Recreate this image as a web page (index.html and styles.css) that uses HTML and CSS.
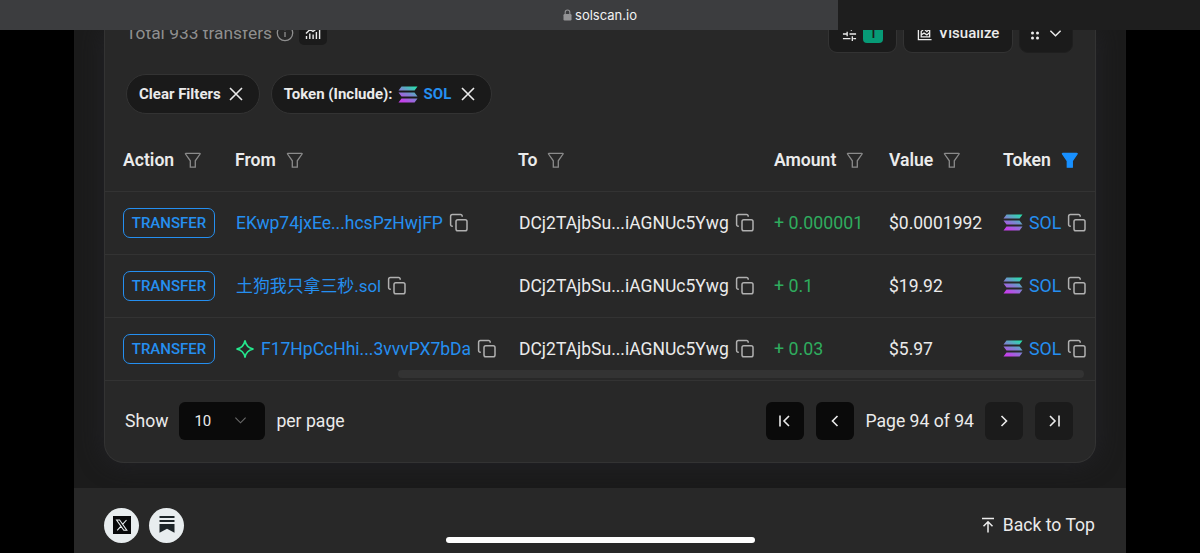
FILE: index.html
```html
<!DOCTYPE html>
<html lang="en">
<head>
    <meta charset="UTF-8">
    <meta name="viewport" content="width=device-width, initial-scale=1.0">
    <title>Solscan</title>
    <link rel="stylesheet" href="styles.css">
</head>
<body>
    <!-- Shared icons -->
    <svg class="icon-defs" aria-hidden="true">
        <defs>
            <linearGradient id="sol-gradient" gradientUnits="userSpaceOnUse" x1="15" y1="0" x2="6" y2="16">
                <stop offset="0" stop-color="#2bdcae"/>
                <stop offset="0.5" stop-color="#7b86d0"/>
                <stop offset="1" stop-color="#c440ea"/>
            </linearGradient>
        </defs>
        <symbol id="icon-filter" viewBox="0 0 18 18">
            <path d="M1.800 2.300h13.900c.4 0 .6.4.4.7L11.300 9.800v6.400H6.300V9.800L1.500 3c-.2-.3 0-.7.3-.7z"/>
        </symbol>
        <symbol id="icon-copy" viewBox="0 0 20 20">
            <rect x="7" y="6.800" width="11" height="11" rx="1.800"/>
            <path d="M3.800 13.200h-.6a1.600 1.600 0 0 1-1.600-1.600V3.400a1.800 1.800 0 0 1 1.800-1.800h8.200a1.600 1.600 0 0 1 1.600 1.600v.6"/>
        </symbol>
        <symbol id="icon-sol" viewBox="0 0 20 17">
            <path d="M3.500.5h16L16.600 4.600H.5zM.5 6.500h16l3 4h-16zM3.500 12.400h16l-2.900 4.100H.5z" fill="url(#sol-gradient)"/>
        </symbol>
        <symbol id="icon-close" viewBox="0 0 14 14">
            <path d="M1 1l12 12M13 1L1 13"/>
        </symbol>
        <symbol id="icon-down" viewBox="0 0 14 9">
            <path d="M1.500 1.500L7 7l5.500-5.500"/>
        </symbol>
    </svg>

    <header class="browser-bar">
        <div class="address">
            <svg class="lock" viewBox="0 0 9 12"><rect x="0.500" y="5" width="8" height="6.500" rx="1.200" fill="#939395"/><path d="M2.200 5.500V3.300a2.300 2.300 0 0 1 4.600 0v2.200" fill="none" stroke="#939395" stroke-width="1.100"/></svg>
            <span>solscan.io</span>
        </div>
    </header>

    <main class="page">
        <section class="card">
            <div class="toolbar">
                <span class="total">Total 933 transfers</span>
                <svg class="info" viewBox="0 0 18 18"><circle cx="9" cy="9" r="7.700"/><path d="M9 8v5M9 5v1.300"/></svg>
                <button type="button" class="chart-btn">
                    <svg viewBox="0 0 16 14"><path d="M1.500 13v-3M4.800 13V7.500M8.100 13V8.500M11.400 13V6M14.600 13V3M1 7.500l4-4 3 2L14 .8"/></svg>
                </button>
                <div class="tools">
                    <button type="button" class="tool tool-filter">
                        <svg class="sliders" viewBox="0 0 16 16"><path d="M1 3h9M13 3h2M10 1v4M1 8.500h4M8 8.500h7M5.500 6v5M1 13.500h8M12 13.500h3M11 11v5"/></svg>
                        <span class="count">1</span>
                    </button>
                    <button type="button" class="tool tool-visualize">
                        <svg class="chart" viewBox="0 0 16 16"><path d="M1.500 1v13.500H15.500M4.500 11.500V6l3-3 3 3 3-3v8.500zM4.500 9.500l3-2 3 2 3-2.500"/></svg>
                        Visualize
                    </button>
                    <button type="button" class="tool tool-more">
                        <svg class="dots" viewBox="0 0 8 14"><circle cx="1.500" cy="2" r="1.500"/><circle cx="6.500" cy="2" r="1.500"/><circle cx="1.500" cy="7" r="1.500"/><circle cx="6.500" cy="7" r="1.500"/><circle cx="1.500" cy="12" r="1.500"/><circle cx="6.500" cy="12" r="1.500"/></svg>
                        <svg class="down"><use href="#icon-down"/></svg>
                    </button>
                </div>
            </div>

            <div class="filters">
                <button type="button" class="pill">Clear Filters <svg class="close"><use href="#icon-close"/></svg></button>
                <button type="button" class="pill">Token (Include): <svg class="sol"><use href="#icon-sol"/></svg> <span class="link">SOL</span> <svg class="close"><use href="#icon-close"/></svg></button>
            </div>

            <div class="table-wrap">
                <table class="transfers">
                    <thead>
                        <tr>
                            <th class="col-action"><div class="cell">Action <svg class="filter"><use href="#icon-filter"/></svg></div></th>
                            <th class="col-from"><div class="cell">From <svg class="filter"><use href="#icon-filter"/></svg></div></th>
                            <th class="col-to"><div class="cell">To <svg class="filter"><use href="#icon-filter"/></svg></div></th>
                            <th class="col-amount"><div class="cell">Amount <svg class="filter"><use href="#icon-filter"/></svg></div></th>
                            <th class="col-value"><div class="cell">Value <svg class="filter"><use href="#icon-filter"/></svg></div></th>
                            <th class="col-token"><div class="cell">Token <svg class="filter active"><use href="#icon-filter"/></svg></div></th>
                        </tr>
                    </thead>
                    <tbody>
                        <tr>
                            <td class="col-action"><span class="badge">TRANSFER</span></td>
                            <td><div class="cell"><a class="link address-text">EKwp74jxEe...hcsPzHwjFP</a><svg class="copy"><use href="#icon-copy"/></svg></div></td>
                            <td><div class="cell"><span class="address-text">DCj2TAjbSu...iAGNUc5Ywg</span><svg class="copy"><use href="#icon-copy"/></svg></div></td>
                            <td class="amount">+ 0.000001</td>
                            <td class="value">$0.0001992</td>
                            <td><div class="cell token"><svg class="sol"><use href="#icon-sol"/></svg><a class="link">SOL</a><svg class="copy"><use href="#icon-copy"/></svg></div></td>
                        </tr>
                        <tr>
                            <td class="col-action"><span class="badge">TRANSFER</span></td>
                            <td><div class="cell"><a class="link address-text domain">土狗我只拿三秒.sol</a><svg class="copy"><use href="#icon-copy"/></svg></div></td>
                            <td><div class="cell"><span class="address-text">DCj2TAjbSu...iAGNUc5Ywg</span><svg class="copy"><use href="#icon-copy"/></svg></div></td>
                            <td class="amount">+ 0.1</td>
                            <td class="value">$19.92</td>
                            <td><div class="cell token"><svg class="sol"><use href="#icon-sol"/></svg><a class="link">SOL</a><svg class="copy"><use href="#icon-copy"/></svg></div></td>
                        </tr>
                        <tr>
                            <td class="col-action"><span class="badge">TRANSFER</span></td>
                            <td><div class="cell"><svg class="spark" viewBox="0 0 20 20"><path d="M10 1.500Q11.200 8.800 18.500 10Q11.200 11.200 10 18.500Q8.800 11.200 1.500 10Q8.800 8.800 10 1.500z"/></svg><a class="link address-text">F17HpCcHhi...3vvvPX7bDa</a><svg class="copy"><use href="#icon-copy"/></svg></div></td>
                            <td><div class="cell"><span class="address-text">DCj2TAjbSu...iAGNUc5Ywg</span><svg class="copy"><use href="#icon-copy"/></svg></div></td>
                            <td class="amount">+ 0.03</td>
                            <td class="value">$5.97</td>
                            <td><div class="cell token"><svg class="sol"><use href="#icon-sol"/></svg><a class="link">SOL</a><svg class="copy"><use href="#icon-copy"/></svg></div></td>
                        </tr>
                    </tbody>
                </table>
                <div class="scroll-thumb"></div>
            </div>

            <div class="pagination">
                <span>Show</span>
                <div class="page-size">10 <svg class="down"><use href="#icon-down"/></svg></div>
                <span>per page</span>
                <div class="pager">
                    <button type="button" aria-label="First page"><svg viewBox="0 0 14 14"><path d="M2 1.500v11M11 2L6 7l5 5"/></svg></button>
                    <button type="button" aria-label="Previous page"><svg viewBox="0 0 14 14"><path d="M9.500 2l-5 5 5 5"/></svg></button>
                    <span class="page-label">Page 94 of 94</span>
                    <button type="button" class="off" aria-label="Next page"><svg viewBox="0 0 14 14"><path d="M4.500 2l5 5-5 5"/></svg></button>
                    <button type="button" class="off" aria-label="Last page"><svg viewBox="0 0 14 14"><path d="M3 2l5 5-5 5M12 1.500v11"/></svg></button>
                </div>
            </div>
        </section>

        <footer class="footer">
            <a class="social" aria-label="X"><svg viewBox="0 0 18 18"><path d="M0 0h18v18H0z" fill="#08090b"/><path d="M3.600 4h3l7.200 10.200h-3zM13.500 4L9.800 8.200M8 10.200L4.200 14.400" fill="none" stroke="#e8edef" stroke-width="1.100"/></svg></a>
            <a class="social" aria-label="Substack"><svg viewBox="0 0 18 18"><path d="M1.500 0h15v2h-15zM1.500 4h15v2h-15zM1.500 8h15v8.800L9 12.700l-7.500 4.100z" fill="#1c2428"/></svg></a>
            <a class="back-top"><svg viewBox="0 0 14 16"><path d="M1 1.500h12M7 15.500V5M2.500 9.200L7 4.700l4.500 4.500"/></svg> Back to Top</a>
        </footer>
    </main>

    <div class="home-indicator"></div>
</body>
</html>
```
FILE: styles.css
```css
* {
    box-sizing: border-box;
}

body {
    margin: 0;
    height: 553px;
    overflow: hidden;
    display: flex;
    flex-direction: column;
    position: relative;
    background-color: #000;
    color: #ebebeb;
    font-family: Roboto, "Noto Sans CJK SC", sans-serif;
    font-size: 17.6px;
}

button {
    margin: 0;
    padding: 0;
    border: none;
    color: inherit;
    font: inherit;
    cursor: pointer;
}

svg {
    display: block;
    flex: none;
    fill: none;
    stroke: currentColor;
}

.icon-defs {
    position: absolute;
    width: 0;
    height: 0;
}

/* Browser bar */
.browser-bar {
    flex: none;
    height: 30px;
    padding-right: 362px;
    background-color: #1e1e1e;
}

.address {
    height: 30px;
    padding-left: 362px;
    background-color: #3c3d3f;
    display: flex;
    align-items: center;
    justify-content: center;
    gap: 3px;
    color: #f2f2f2;
    font-family: Inter, sans-serif;
    font-size: 13px;
}

.lock {
    width: 9px;
    height: 12px;
    stroke: none;
}

/* Page */
.page {
    flex: 1;
    min-height: 0;
    width: 1052px;
    margin: 0 auto;
    display: flex;
    flex-direction: column;
    overflow: hidden;
    background-color: #1b1b1b;
}

.card {
    flex: none;
    height: 433px;
    margin: 0 30px 25px;
    border: 1px solid #333;
    border-top: none;
    border-radius: 0 0 20px 20px;
    background-color: #282828;
    box-shadow: 0 0 24px #232328;
}

.toolbar {
    height: 38px;
    margin-top: -16px;
    padding: 0 22px 0 21px;
    display: flex;
    align-items: center;
}

.total {
    color: #8f8f8f;
    font-size: 17.4px;
}

.info {
    width: 18px;
    height: 18px;
    margin-left: 4px;
    color: #8f8f8f;
    stroke-width: 1.3;
}

.chart-btn {
    width: 28px;
    height: 24px;
    margin-left: 5px;
    display: flex;
    align-items: center;
    justify-content: center;
    border-radius: 5px;
    background-color: #1b1b1b;
}

.chart-btn svg {
    width: 16px;
    height: 14px;
    stroke-width: 1.4;
}

.tools {
    margin-left: auto;
    display: flex;
    gap: 6px;
}

.tool {
    height: 39px;
    display: flex;
    align-items: center;
    justify-content: center;
    border: 1px solid #333;
    border-radius: 9px;
    background-color: #1b1b1b;
    font-size: 15px;
    font-weight: 500;
}

.tool-filter {
    width: 69px;
    gap: 6px;
}

.tool-visualize {
    width: 110px;
    gap: 7px;
}

.tool-more {
    width: 54px;
    gap: 10px;
    border-color: #1f1f1f;
}

.sliders,
.chart {
    width: 15px;
    height: 15px;
    stroke-width: 1.4;
}

.count {
    width: 20px;
    height: 20px;
    border-radius: 4px;
    background-color: #079a76;
    color: #1b1b1b;
    line-height: 20px;
}

.dots {
    width: 8px;
    height: 14px;
    fill: currentColor;
    stroke: none;
}

.down {
    width: 13px;
    height: 9px;
    stroke-width: 1.6;
}

/* Active filters */
.filters {
    padding: 22px 21px 0;
    display: flex;
    gap: 11px;
}

.pill {
    height: 40px;
    padding: 0 16px 0 12px;
    display: flex;
    align-items: center;
    border: 1px solid #333;
    border-radius: 20px;
    background-color: #1a1a1a;
    font-size: 15px;
    font-weight: 700;
}

.close {
    width: 14px;
    height: 14px;
    margin-left: 8px;
    stroke-width: 1.6;
}

.pill .sol {
    margin: 0 6px 0 5px;
}

.pill .link {
    margin-right: 2px;
}

.sol {
    width: 20px;
    height: 17px;
    stroke: none;
}

.link {
    color: #258ff0;
}

/* Transfers table */
.table-wrap {
    position: relative;
    margin-top: 13px;
}

.transfers {
    width: 100%;
    table-layout: fixed;
    border-collapse: collapse;
}

.transfers th,
.transfers td {
    height: 63px;
    padding: 0;
    border-bottom: 1px solid #333;
    text-align: left;
    white-space: nowrap;
}

.transfers th {
    height: 64px;
    padding-top: 2px;
    font-weight: 600;
}

.transfers .col-action {
    width: 130px;
    padding-left: 18px;
}

.col-from {
    width: 283px;
}

.col-to {
    width: 256px;
}

.col-amount {
    width: 115px;
}

.col-value {
    width: 114px;
}

.cell {
    display: flex;
    align-items: center;
}

.filter {
    width: 18px;
    height: 18px;
    margin-left: 10px;
    color: #8b8b8b;
    stroke-width: 1.3;
}

.filter.active {
    color: #1890ff;
    fill: currentColor;
}

.badge {
    width: 92px;
    height: 30px;
    display: block;
    border: 1px solid #258ff0;
    border-radius: 7px;
    color: #258ff0;
    font-size: 15px;
    font-weight: 500;
    line-height: 28px;
    text-align: center;
}

.address-text {
    margin-left: 1px;
    font-size: 17.5px;
}

.domain {
    font-size: 16.9px;
    line-height: 20px;
}

.copy {
    width: 20px;
    height: 20px;
    margin-left: 6px;
    color: #b0b0b0;
    stroke-width: 1.5;
}

.spark {
    width: 20px;
    height: 20px;
    margin-right: 5px;
    color: #25e78d;
    stroke-width: 1.6;
}

.token .link {
    margin-left: 6px;
    font-size: 17.8px;
}

.amount {
    color: #2fac5e;
    font-size: 17.8px;
}

.value {
    font-size: 17.5px;
}

.scroll-thumb {
    position: absolute;
    right: 11px;
    bottom: 3px;
    width: 686px;
    height: 8px;
    border-radius: 4px;
    background-color: #333;
}

/* Pagination */
.pagination {
    padding: 21px 22px 0 20px;
    display: flex;
    align-items: center;
}

.page-size {
    width: 86px;
    height: 38px;
    margin: 0 11px;
    padding: 0 18px 0 15px;
    display: flex;
    align-items: center;
    justify-content: space-between;
    border-radius: 6px;
    background-color: #0a0a0a;
    font-size: 15px;
}

.page-size .down {
    color: #696969;
    stroke-width: 1.2;
}

.pager {
    margin-left: auto;
    display: flex;
    align-items: center;
    gap: 12px;
}

.page-label {
    margin: 0 -1px;
}

.pager button {
    width: 38px;
    height: 38px;
    display: flex;
    align-items: center;
    justify-content: center;
    border-radius: 6px;
    background-color: #0a0a0a;
}

.pager .off {
    background-color: #1b1b1b;
}

.pager svg {
    width: 14px;
    height: 14px;
    stroke-width: 1.6;
}

/* Footer */
.footer {
    flex: 1;
    padding: 9px 31px 0 30px;
    display: flex;
    align-items: center;
    gap: 10px;
    background-color: #282828;
}

.social {
    width: 35px;
    height: 35px;
    display: flex;
    align-items: center;
    justify-content: center;
    border-radius: 50%;
    background-color: #e8edef;
}

.social svg {
    width: 18px;
    height: 18px;
    stroke: none;
}

.back-top {
    margin-left: auto;
    display: flex;
    align-items: center;
    gap: 8px;
}

.back-top svg {
    width: 14px;
    height: 16px;
    stroke-width: 1.5;
}

.home-indicator {
    position: absolute;
    left: 446px;
    bottom: 10px;
    width: 309px;
    height: 6px;
    border-radius: 3px;
    background-color: #fff;
}
```
